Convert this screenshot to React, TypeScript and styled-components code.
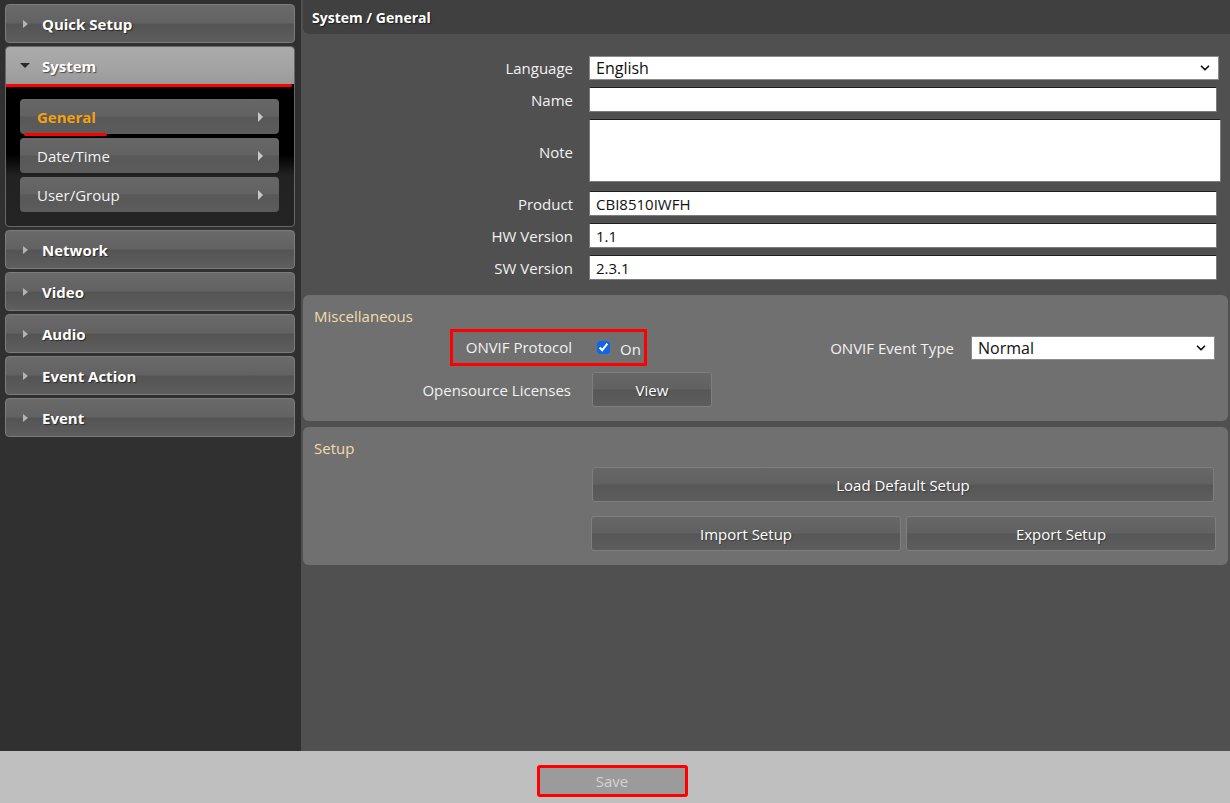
import { FunctionComponent, ReactNode } from "react";
import styled, { createGlobalStyle, css } from "styled-components";
import { ChevronDown } from "lucide-react";

const GlobalStyle = createGlobalStyle`
  html, body {
    margin: 0;
    padding: 0;
    background: #505050;
    font-family: "Open Sans", "Noto Sans", sans-serif;
  }
  * {
    box-sizing: border-box;
  }
`;

const menuTop = [{ label: "Quick Setup" }];
const menuBottom = ["Network", "Video", "Audio", "Event Action", "Event"];
const subMenu = ["General", "Date/Time", "User/Group"];

const SelectBox: FunctionComponent<{ value: string; width?: number; extend?: number }> = ({ value, width, extend }) => (
  <SelectWrap $width={width} $extend={extend}>
    <NativeSelect defaultValue={value}>
      <option>{value}</option>
    </NativeSelect>
    <Chevron>
      <ChevronDown size={14} strokeWidth={3} color="#111" />
    </Chevron>
  </SelectWrap>
);

const FormRow: FunctionComponent<{ label: string; children: ReactNode }> = ({ label, children }) => (
  <>
    <FieldLabel>{label}</FieldLabel>
    {children}
  </>
);

export default function App() {
  return (
    <>
      <GlobalStyle />
      <Page>
        <Body>
          <Sidebar>
            {menuTop.map((m) => (
              <MenuItem key={m.label}>
                <ArrowRight />
                {m.label}
              </MenuItem>
            ))}
            <Group>
              <GroupHeader>
                <ArrowDown />
                System
              </GroupHeader>
              <RedBar />
              <SubList>
                {subMenu.map((s, i) => (
                  <SubItem key={s} $active={i === 0}>
                    {s}
                    <SubArrow />
                  </SubItem>
                ))}
              </SubList>
            </Group>
            {menuBottom.map((m) => (
              <MenuItem key={m}>
                <ArrowRight />
                {m}
              </MenuItem>
            ))}
          </Sidebar>

          <Main>
            <Header>System / General</Header>
            <GeneralForm>
              <FormRow label="Language">
                <SelectBox value="English" extend={2} />
              </FormRow>
              <FormRow label="Name">
                <TextInput />
              </FormRow>
              <FormRow label="Note">
                <NoteArea />
              </FormRow>
              <FormRow label="Product">
                <TextInput defaultValue="CBI8510IWFH" />
              </FormRow>
              <FormRow label="HW Version">
                <TextInput defaultValue="1.1" />
              </FormRow>
              <FormRow label="SW Version">
                <TextInput defaultValue="2.3.1" />
              </FormRow>
            </GeneralForm>

            <Section $first>
              <SectionTitle>Miscellaneous</SectionTitle>
              <MiscRow>
                <Highlight>
                  <HighlightLabel>ONVIF Protocol</HighlightLabel>
                  <CheckBox type="checkbox" defaultChecked />
                  <CheckText>On</CheckText>
                </Highlight>
                <Spacer />
                <InlineLabel>ONVIF Event Type</InlineLabel>
                <SelectBox value="Normal" width={244} />
              </MiscRow>
              <LicenseRow>
                <RowLabel>Opensource Licenses</RowLabel>
                <Button $width={120}>View</Button>
              </LicenseRow>
            </Section>

            <Section>
              <SectionTitle>Setup</SectionTitle>
              <SetupButtons>
                <Button $wide>Load Default Setup</Button>
                <ButtonPair>
                  <Button>Import Setup</Button>
                  <Button>Export Setup</Button>
                </ButtonPair>
              </SetupButtons>
            </Section>
          </Main>
        </Body>

        <Footer>
          <SaveButton>Save</SaveButton>
        </Footer>
      </Page>
    </>
  );
}

const Page = styled.div`
  width: 1230px;
  height: 803px;
  display: flex;
  flex-direction: column;
  overflow: hidden;
`;

const Body = styled.div`
  flex: 1;
  display: flex;
  min-height: 0;
`;

const Sidebar = styled.nav`
  width: 301px;
  flex-shrink: 0;
  background: #303030;
  padding: 4px 6px 0 5px;
  display: flex;
  flex-direction: column;
  gap: 3px;
`;

const boldText = css`
  color: #ffffff;
  font-weight: 700;
  font-size: 15px;
  text-shadow: 1px 1px 1px rgba(0, 0, 0, 0.55);
`;

const MenuItem = styled.div`
  height: 39px;
  flex-shrink: 0;
  display: flex;
  align-items: center;
  padding-left: 17px;
  border: 1px solid #7b7b7b;
  border-radius: 4px;
  background: linear-gradient(#6a6a6a 0%, #626262 48%, #545454 52%, #5e5e5e 100%);
  ${boldText};
`;

const ArrowRight = styled.span`
  width: 0;
  height: 0;
  border-top: 4px solid transparent;
  border-bottom: 4px solid transparent;
  border-left: 5px solid #b4b4b4;
  margin-right: 14px;
`;

const ArrowDown = styled.span`
  width: 0;
  height: 0;
  border-left: 5px solid transparent;
  border-right: 5px solid transparent;
  border-top: 5px solid #2a2a2a;
  margin-right: 12px;
  margin-left: -3px;
`;

const Group = styled.div`
  height: 181px;
  flex-shrink: 0;
  border: 1px solid #666;
  border-radius: 4px;
  overflow: hidden;
  background: linear-gradient(#000 0%, #000 60%, #222 72%, #242424 100%);
`;

const GroupHeader = styled.div`
  height: 37px;
  display: flex;
  align-items: center;
  padding-left: 17px;
  background: linear-gradient(#ababab 0%, #a4a4a4 50%, #9a9a9a 100%);
  ${boldText};
`;

const RedBar = styled.div`
  height: 3px;
  margin-right: 2px;
  background: #ff0000;
  border-radius: 0 2px 2px 0;
`;

const SubList = styled.div`
  display: flex;
  flex-direction: column;
  gap: 4px;
  padding: 12px 15px 0 14px;
`;

const SubItem = styled.div<{ $active?: boolean }>`
  position: relative;
  height: 35px;
  display: flex;
  align-items: center;
  justify-content: space-between;
  padding: 0 16px 0 17px;
  border-radius: 4px;
  background: linear-gradient(#676767 0%, #626262 48%, #585858 52%, #5c5c5c 100%);
  font-size: 15px;
  color: #f2f2f2;
  ${({ $active }) =>
    $active &&
    css`
      color: #f5a20c;
      font-weight: 700;
      &::after {
        content: "";
        position: absolute;
        left: 4px;
        bottom: -2px;
        width: 83px;
        height: 3px;
        border-radius: 2px;
        background: #ff0000;
      }
    `};
`;

const SubArrow = styled.span`
  width: 0;
  height: 0;
  border-top: 5px solid transparent;
  border-bottom: 5px solid transparent;
  border-left: 5px solid #c8c8c8;
`;

const Main = styled.main`
  flex: 1;
  background: #505050;
  padding-left: 2px;
  display: flex;
  flex-direction: column;
`;

const Header = styled.div`
  height: 34px;
  flex-shrink: 0;
  background: #404040;
  border-bottom-left-radius: 6px;
  display: flex;
  align-items: center;
  padding-left: 9px;
  ${boldText};
  font-size: 14px;
`;

const GeneralForm = styled.div`
  display: grid;
  grid-template-columns: 270px 1fr;
  column-gap: 16px;
  row-gap: 7px;
  align-items: center;
  padding: 22px 13px 0 0;
`;

const labelText = css`
  font-size: 15px;
  color: #f2f2f2;
  white-space: nowrap;
`;

const FieldLabel = styled.label`
  ${labelText};
  text-align: right;
`;

const fieldBase = css`
  width: 100%;
  background: #ffffff;
  border: 1px solid #7c7c7c;
  border-top-color: #1e1e1e;
  font-family: "Open Sans", "Noto Sans", sans-serif;
  font-size: 15px;
  color: #111;
  padding: 0 6px;
  outline: none;
`;

const TextInput = styled.input`
  ${fieldBase};
  height: 25px;
`;

const NoteArea = styled.textarea`
  ${fieldBase};
  height: 63px;
  width: calc(100% + 4px);
  margin-bottom: 2px;
  resize: none;
`;

const SelectWrap = styled.div<{ $width?: number; $extend?: number }>`
  position: relative;
  height: 24px;
  width: ${({ $width, $extend }) => ($width ? `${$width}px` : `calc(100% + ${$extend || 0}px)`)};
  flex-shrink: 0;
`;

const NativeSelect = styled.select`
  ${fieldBase};
  appearance: none;
  height: 24px;
  border-color: #8a8a8a;
  font-size: 16px;
`;

const Chevron = styled.span`
  position: absolute;
  right: 7px;
  top: 5px;
  display: flex;
  pointer-events: none;
`;

const Section = styled.section<{ $first?: boolean }>`
  margin: ${({ $first }) => ($first ? "15px" : "6px")} 2px 0 0;
  background: #707070;
  border-radius: 6px;
  padding: 9px 0 14px 0;
`;

const SectionTitle = styled.div`
  font-size: 15px;
  color: #f3dcae;
  padding-left: 11px;
  line-height: 24px;
`;

const MiscRow = styled.div`
  display: flex;
  align-items: center;
  margin-top: 1px;
  padding-right: 13px;
`;

const Highlight = styled.div`
  margin-left: 147px;
  width: 197px;
  height: 37px;
  border: 3px solid #ff0000;
  display: flex;
  align-items: center;
`;

const HighlightLabel = styled.span`
  ${labelText};
  width: 119px;
  display: flex;
  justify-content: flex-end;
  margin-top: -2px;
`;

const CheckBox = styled.input`
  margin: 0 0 0 25px;
  width: 13px;
  height: 13px;
  accent-color: #0f66e8;
`;

const CheckText = styled.span`
  ${labelText};
  margin-left: 10px;
  margin-top: 2px;
`;

const Spacer = styled.div`
  flex: 1;
`;

const InlineLabel = styled.span`
  ${labelText};
  margin-right: 17px;
`;

const LicenseRow = styled.div`
  display: flex;
  align-items: center;
  margin-top: 6px;
`;

const RowLabel = styled.span`
  ${labelText};
  width: 268px;
  text-align: right;
  margin-right: 21px;
`;

const Button = styled.button<{ $width?: number; $wide?: boolean }>`
  height: 35px;
  flex-shrink: 0;
  ${({ $width, $wide }) => ($width ? `width: ${$width}px;` : $wide ? "" : "flex: 1;")}
  ${({ $wide }) => $wide && "margin: 0 2px 0 1px;"}
  border: 1px solid #7e7e7e;
  border-radius: 3px;
  background: linear-gradient(#676767 0%, #616161 48%, #575757 52%, #5d5d5d 100%);
  color: #ffffff;
  font-family: "Open Sans", "Noto Sans", sans-serif;
  font-size: 15px;
  padding: 0;
  text-shadow: 1px 1px 1px rgba(0, 0, 0, 0.35);
`;

const SetupButtons = styled.div`
  display: flex;
  flex-direction: column;
  gap: 14px;
  padding: 7px 12px 0 288px;
`;

const ButtonPair = styled.div`
  display: flex;
  gap: 5px;
`;

const Footer = styled.footer`
  height: 52px;
  flex-shrink: 0;
  background: #bfbfbf;
  display: flex;
  justify-content: center;
  padding: 14px 6px 0 0;
`;

const SaveButton = styled.button`
  width: 151px;
  height: 32px;
  border: 3px solid #ff0000;
  border-radius: 3px;
  background: #9b9b9b;
  color: #d4d4d4;
  font-family: "Open Sans", "Noto Sans", sans-serif;
  font-size: 15px;
  padding: 0;
`;
